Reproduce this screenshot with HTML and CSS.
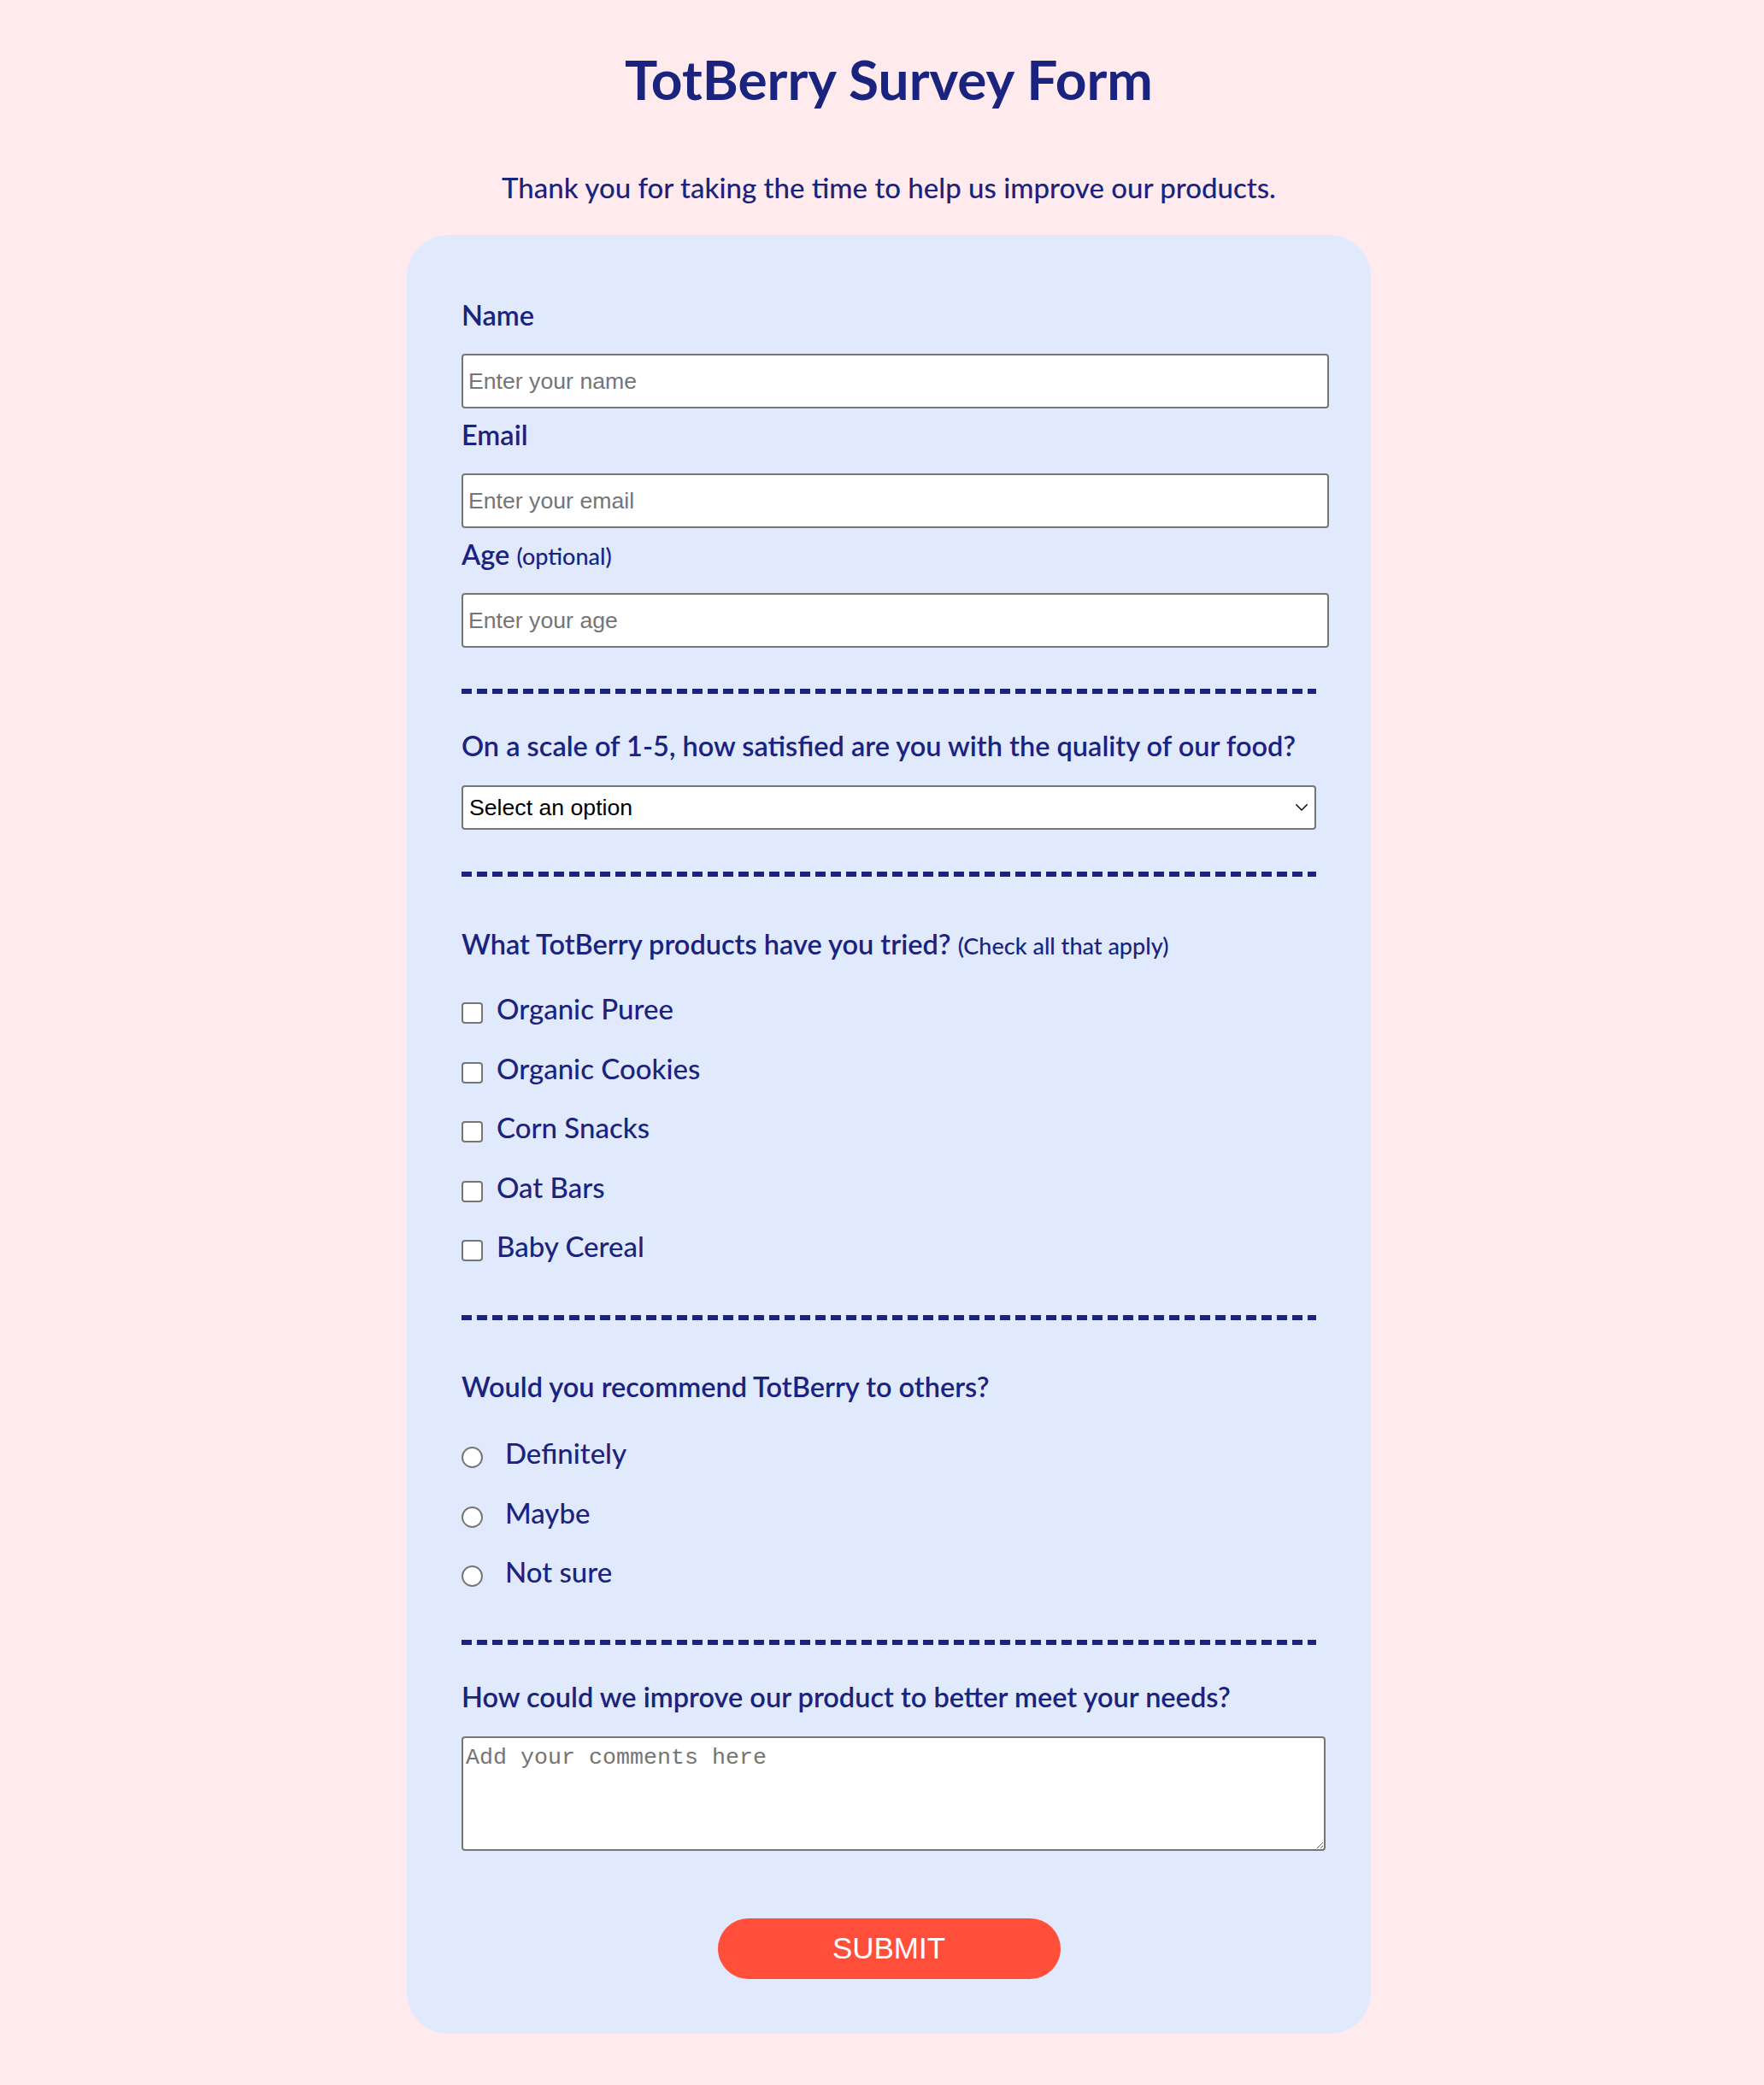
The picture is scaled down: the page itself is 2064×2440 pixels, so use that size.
FILE: index.html
```html
<!DOCTYPE html>
<html lang="en">
<head>
<meta charset="utf-8">
<title>TotBerry Survey Form</title>
<link rel="stylesheet" href="styles.css">
</head>
<body>
<main class="page">
  <h1 class="title" id="title">TotBerry Survey Form</h1>
  <p class="description" id="description">Thank you for taking the time to help us improve our products.</p>

  <form class="survey" id="survey-form">
    <label class="label label-first" for="name" id="name-label">Name</label>
    <input class="text-input" type="text" id="name" placeholder="Enter your name">

    <label class="label label-next" for="email" id="email-label">Email</label>
    <input class="text-input" type="email" id="email" placeholder="Enter your email">

    <label class="label label-next" for="number" id="number-label">Age <span class="small">(optional)</span></label>
    <input class="text-input" type="number" id="number" placeholder="Enter your age">

    <hr class="divider divider-1">

    <label class="label question-label" for="dropdown">On a scale of 1-5, how satisfied are you with the quality of our food?</label>
    <div class="select-wrap">
      <select class="select" id="dropdown">
        <option>Select an option</option>
        <option>1</option>
        <option>2</option>
        <option>3</option>
        <option>4</option>
        <option>5</option>
      </select>
      <svg class="select-arrow" viewBox="0 0 14 8" width="14" height="8" aria-hidden="true">
        <path d="M0.8 0.8 L7 7 L13.2 0.8" fill="none" stroke="#000" stroke-width="1.4" stroke-linecap="round" stroke-linejoin="round"/>
      </svg>
    </div>

    <hr class="divider divider-2">

    <p class="label question">What TotBerry products have you tried? <span class="small">(Check all that apply)</span></p>
    <div class="options options-check">
      <label class="option"><input class="check" type="checkbox" value="puree"><span>Organic Puree</span></label>
      <label class="option"><input class="check" type="checkbox" value="cookies"><span>Organic Cookies</span></label>
      <label class="option"><input class="check" type="checkbox" value="corn"><span>Corn Snacks</span></label>
      <label class="option"><input class="check" type="checkbox" value="oat"><span>Oat Bars</span></label>
      <label class="option"><input class="check" type="checkbox" value="cereal"><span>Baby Cereal</span></label>
    </div>

    <hr class="divider divider-3">

    <p class="label question">Would you recommend TotBerry to others?</p>
    <div class="options options-radio">
      <label class="option option-radio"><input class="radio" type="radio" name="recommend" value="definitely"><span>Definitely</span></label>
      <label class="option option-radio"><input class="radio" type="radio" name="recommend" value="maybe"><span>Maybe</span></label>
      <label class="option option-radio"><input class="radio" type="radio" name="recommend" value="not-sure"><span>Not sure</span></label>
    </div>

    <hr class="divider divider-4">

    <label class="label question-label" for="comments">How could we improve our product to better meet your needs?</label>
    <textarea class="comments" id="comments" placeholder="Add your comments here"></textarea>

    <button class="submit" type="submit" id="submit">SUBMIT</button>
  </form>
</main>
</body>
</html>
```

FILE: styles.css
```css
* {
  box-sizing: border-box;
}

body {
  margin: 0;
  padding: 0 0 0 16px;
  background: #ffebee;
  color: #1a237e;
  font-family: Lato, "Noto Sans", sans-serif;
}

.page {
  padding-bottom: 59px;
}

.title {
  margin: 53px 0 0;
  font-size: 64px;
  line-height: 80px;
  font-weight: 700;
  text-align: center;
}

.description {
  margin: 66px 0 0;
  font-size: 33px;
  line-height: 40px;
  font-weight: 500;
  text-align: center;
}

.survey {
  display: flex;
  flex-direction: column;
  align-items: flex-start;
  width: 1128px;
  margin: 36px auto 0;
  padding: 64px;
  background: #e1eafd;
  border-radius: 48px;
}

.label {
  display: block;
  margin: 0;
  font-size: 32.5px;
  line-height: 38px;
  font-weight: 600;
}

.small {
  font-size: 27px;
  line-height: 1;
  font-weight: 500;
}

.label-first {
  margin-top: 11px;
}

.label-next {
  margin-top: 12px;
}

.text-input {
  display: block;
  width: 1015px;
  height: 64px;
  margin: 26px 0 0;
  padding: 0 6px;
  border: 2px solid #767676;
  border-radius: 4px;
  background: #fff;
  font-family: "Liberation Sans", Arial, sans-serif;
  font-size: 26.67px;
  color: #000;
}

.text-input::placeholder,
.comments::placeholder {
  color: #757575;
}

.divider {
  width: 1000px;
  height: 6px;
  margin: 0;
  border: 0;
  background: repeating-linear-gradient(90deg, #1a237e 0 12px, transparent 12px 18px);
}

.divider-1 {
  margin-top: 48px;
}

.divider-2 {
  margin-top: 49px;
}

.divider-3 {
  margin-top: 62.8px;
}

.divider-4 {
  margin-top: 61.8px;
}

.question-label {
  margin-top: 42px;
}

.question {
  margin-top: 60px;
}

.divider-3 + .question {
  margin-top: 59px;
}

.select-wrap {
  position: relative;
  margin-top: 27px;
}

.select {
  display: block;
  width: 1000px;
  height: 52px;
  padding: 0 40px 0 7px;
  appearance: none;
  border: 2px solid #767676;
  border-radius: 4px;
  background: #fff;
  color: #000;
  font-family: "Liberation Sans", Arial, sans-serif;
  font-size: 26.67px;
}

.select-arrow {
  position: absolute;
  right: 10px;
  top: 22px;
  pointer-events: none;
}

.options {
  display: flex;
  flex-direction: column;
  gap: 33.5px;
}

.options-check {
  margin-top: 38.2px;
}

.options-radio {
  margin-top: 40.2px;
}

.option {
  display: flex;
  align-items: flex-start;
  gap: 16px;
  height: 36px;
  font-size: 33px;
  line-height: 36px;
  font-weight: 500;
}

.option-radio {
  gap: 26px;
}

.check,
.radio {
  appearance: none;
  flex: none;
  width: 25px;
  height: 25px;
  margin: 11.3px 0 0;
  border: 2px solid #767676;
  background: #fff;
}

.check {
  border-radius: 4px;
}

.radio {
  border-radius: 50%;
}

.comments {
  display: block;
  width: 1011px;
  height: 134px;
  margin-top: 27px;
  padding: 8px 3px;
  border: 2px solid #767676;
  border-radius: 4px;
  background: #fff;
  font-family: "Liberation Mono", "Courier New", monospace;
  font-size: 26.67px;
}

.submit {
  display: block;
  align-self: center;
  width: 401px;
  height: 71px;
  margin-top: 79px;
  border: 0;
  border-radius: 36px;
  background: #ff4f3a;
  color: #fff;
  font-family: "Liberation Sans", Arial, sans-serif;
  font-size: 35px;
}
```
